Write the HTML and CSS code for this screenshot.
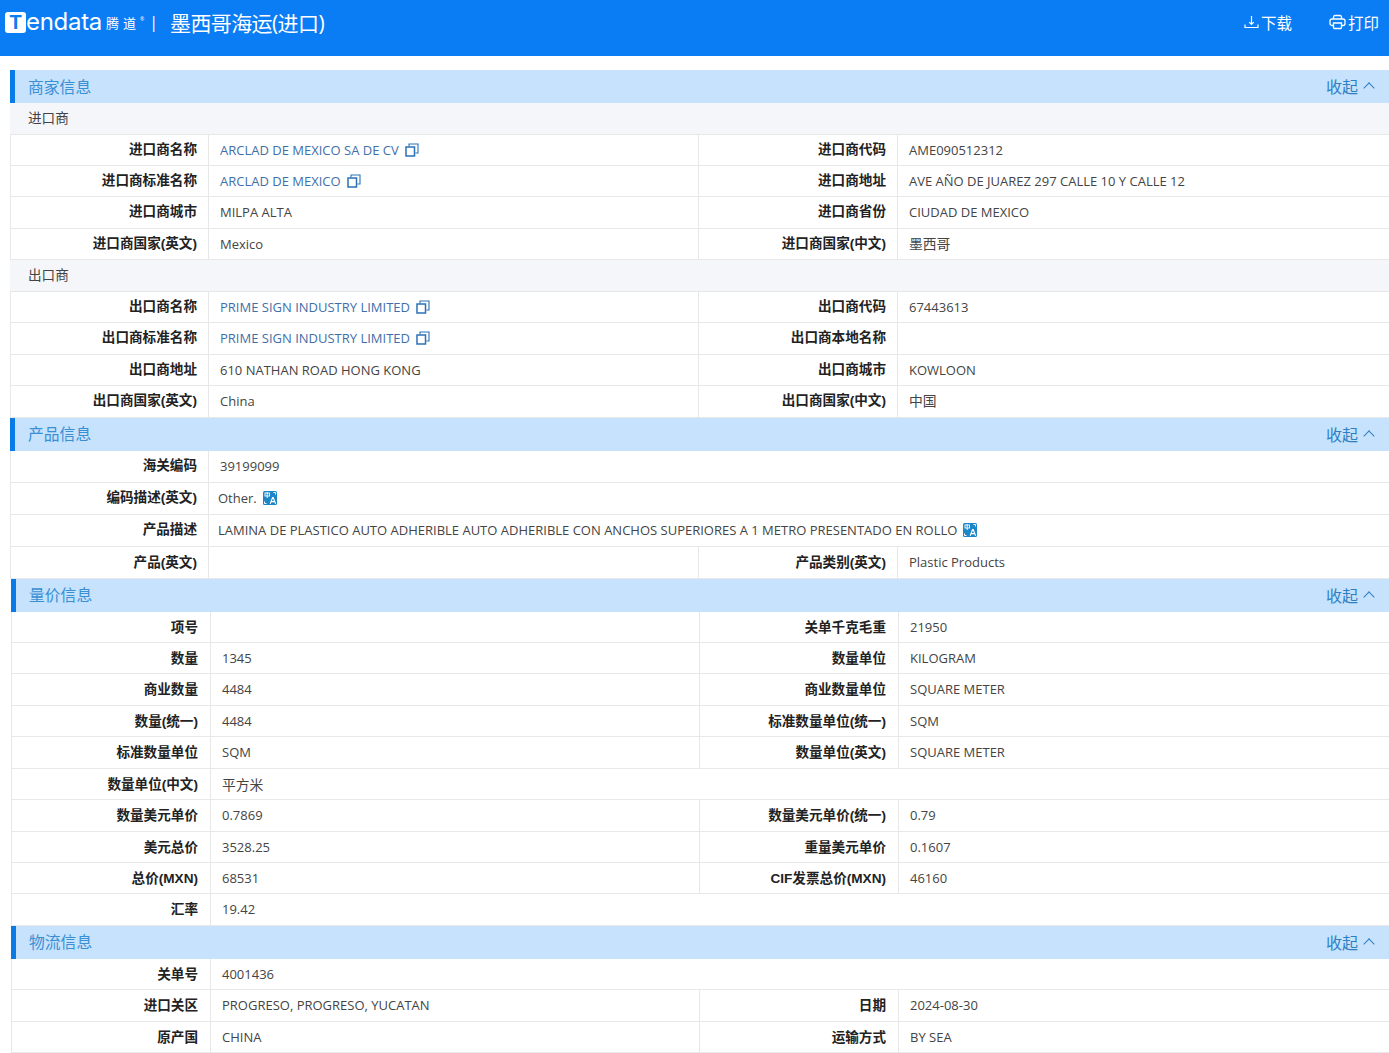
FILE: index.html
```html
<!DOCTYPE html>
<html lang="en">
<head>
    <meta charset="UTF-8">
    <meta name="viewport" content="width=device-width, initial-scale=1.0">
    <link rel="stylesheet" href="styles.css">
    <title>墨西哥海运(进口)</title>
</head>
<body>
    <svg class="defs" width="0" height="0">
        <symbol id="copy" viewBox="0 0 14 14">
            <path d="M1 4h8.5v9H1z" fill="none" stroke="currentColor" stroke-width="1.5"/>
            <path d="M4 3.5V1h9v9h-2.6" fill="none" stroke="currentColor" stroke-width="1.1"/>
        </symbol>
    </svg>

    <header class="top-bar">
        <div class="brand">
            <span class="logo-t">T</span><span class="logo-word">endata</span>
            <span class="logo-cn">腾道</span><sup class="logo-reg">®</sup>
            <span class="logo-sep">|</span>
        </div>
        <h1 class="page-title">墨西哥海运(进口)</h1>
        <div class="top-actions">
            <a class="top-action">
                <svg width="15" height="16" viewBox="0 0 15 16" fill="none" stroke="#fff" stroke-width="1.2"><path d="M7.5 2v8.5M5.2 8.2l2.3 2.3 2.3-2.3M1 10.5V13.5h13v-3"/></svg>下载
            </a>
            <a class="top-action">
                <svg width="17" height="16" viewBox="0 0 17 16" fill="none" stroke="#fff" stroke-width="1.3"><path d="M4.5 5V3A1.5 1.5 0 016 1.5h5A1.5 1.5 0 0112.5 3v2"/><rect x="1" y="5" width="15" height="6.5" rx="2"/><path d="M4.5 9h8v4.5a1 1 0 01-1 1h-6a1 1 0 01-1-1z" fill="#0a7cf4"/></svg>打印
            </a>
        </div>
    </header>

    <main class="content">
        <section class="block">
            <div class="block-head"><h2>商家信息</h2><a class="collapse">收起<i class="chevron"></i></a></div>
            <div class="sub-head">进口商</div>
            <div class="row"><div class="label">进口商名称</div><div class="value link">ARCLAD DE MEXICO SA DE CV<svg class="copy-icon"><use href="#copy"/></svg></div><div class="label">进口商代码</div><div class="value">AME090512312</div></div>
            <div class="row"><div class="label">进口商标准名称</div><div class="value link">ARCLAD DE MEXICO<svg class="copy-icon"><use href="#copy"/></svg></div><div class="label">进口商地址</div><div class="value">AVE AÑO DE JUAREZ 297 CALLE 10 Y CALLE 12</div></div>
            <div class="row"><div class="label">进口商城市</div><div class="value">MILPA ALTA</div><div class="label">进口商省份</div><div class="value">CIUDAD DE MEXICO</div></div>
            <div class="row"><div class="label">进口商国家(英文)</div><div class="value">Mexico</div><div class="label">进口商国家(中文)</div><div class="value value-cn">墨西哥</div></div>
            <div class="sub-head">出口商</div>
            <div class="row"><div class="label">出口商名称</div><div class="value link">PRIME SIGN INDUSTRY LIMITED<svg class="copy-icon"><use href="#copy"/></svg></div><div class="label">出口商代码</div><div class="value">67443613</div></div>
            <div class="row"><div class="label">出口商标准名称</div><div class="value link">PRIME SIGN INDUSTRY LIMITED<svg class="copy-icon"><use href="#copy"/></svg></div><div class="label">出口商本地名称</div><div class="value"></div></div>
            <div class="row"><div class="label">出口商地址</div><div class="value">610 NATHAN ROAD HONG KONG</div><div class="label">出口商城市</div><div class="value">KOWLOON</div></div>
            <div class="row"><div class="label">出口商国家(英文)</div><div class="value">China</div><div class="label">出口商国家(中文)</div><div class="value value-cn">中国</div></div>
        </section>

        <section class="block block-tall">
            <div class="block-head"><h2>产品信息</h2><a class="collapse">收起<i class="chevron"></i></a></div>
            <div class="row row-wide"><div class="label">海关编码</div><div class="value">39199099</div></div>
            <div class="row row-wide"><div class="label">编码描述(英文)</div><div class="value value-tight">Other.<svg class="translate-icon" viewBox="0 0 14 14"><rect width="14" height="14" rx="1.5" fill="#1d86c8"/><path d="M1.5 10.5v2h2M12.5 3.5v-2h-2" stroke="#fff" stroke-width="1" fill="none"/><rect x="2" y="2" width="4.5" height="3" fill="none" stroke="#fff" stroke-width="0.9"/><path d="M4.2 1v6" stroke="#fff" stroke-width="0.9"/><path d="M7.2 12.8L9.6 6.5h.6l2.4 6.3M8.2 10.6h3.4" stroke="#fff" stroke-width="1.1" fill="none"/></svg></div></div>
            <div class="row row-wide"><div class="label">产品描述</div><div class="value value-tight">LAMINA DE PLASTICO AUTO ADHERIBLE AUTO ADHERIBLE CON ANCHOS SUPERIORES A 1 METRO PRESENTADO EN ROLLO<svg class="translate-icon" viewBox="0 0 14 14"><rect width="14" height="14" rx="1.5" fill="#1d86c8"/><path d="M1.5 10.5v2h2M12.5 3.5v-2h-2" stroke="#fff" stroke-width="1" fill="none"/><rect x="2" y="2" width="4.5" height="3" fill="none" stroke="#fff" stroke-width="0.9"/><path d="M4.2 1v6" stroke="#fff" stroke-width="0.9"/><path d="M7.2 12.8L9.6 6.5h.6l2.4 6.3M8.2 10.6h3.4" stroke="#fff" stroke-width="1.1" fill="none"/></svg></div></div>
            <div class="row row-last"><div class="label">产品(英文)</div><div class="value"></div><div class="label">产品类别(英文)</div><div class="value">Plastic Products</div></div>
        </section>

        <section class="block block-shift">
            <div class="block-head"><h2>量价信息</h2><a class="collapse">收起<i class="chevron"></i></a></div>
            <div class="row"><div class="label">项号</div><div class="value"></div><div class="label">关单千克毛重</div><div class="value">21950</div></div>
            <div class="row"><div class="label">数量</div><div class="value">1345</div><div class="label">数量单位</div><div class="value">KILOGRAM</div></div>
            <div class="row"><div class="label">商业数量</div><div class="value">4484</div><div class="label">商业数量单位</div><div class="value">SQUARE METER</div></div>
            <div class="row"><div class="label">数量(统一)</div><div class="value">4484</div><div class="label">标准数量单位(统一)</div><div class="value">SQM</div></div>
            <div class="row"><div class="label">标准数量单位</div><div class="value">SQM</div><div class="label">数量单位(英文)</div><div class="value">SQUARE METER</div></div>
            <div class="row row-wide"><div class="label">数量单位(中文)</div><div class="value value-cn">平方米</div></div>
            <div class="row"><div class="label">数量美元单价</div><div class="value">0.7869</div><div class="label">数量美元单价(统一)</div><div class="value">0.79</div></div>
            <div class="row"><div class="label">美元总价</div><div class="value">3528.25</div><div class="label">重量美元单价</div><div class="value">0.1607</div></div>
            <div class="row"><div class="label">总价(MXN)</div><div class="value">68531</div><div class="label">CIF发票总价(MXN)</div><div class="value">46160</div></div>
            <div class="row row-wide"><div class="label">汇率</div><div class="value">19.42</div></div>
        </section>

        <section class="block block-shift">
            <div class="block-head"><h2>物流信息</h2><a class="collapse">收起<i class="chevron"></i></a></div>
            <div class="row row-wide"><div class="label">关单号</div><div class="value">4001436</div></div>
            <div class="row"><div class="label">进口关区</div><div class="value">PROGRESO, PROGRESO, YUCATAN</div><div class="label">日期</div><div class="value">2024-08-30</div></div>
            <div class="row"><div class="label">原产国</div><div class="value">CHINA</div><div class="label">运输方式</div><div class="value">BY SEA</div></div>
        </section>
    </main>
</body>
</html>
```

FILE: styles.css
```css
* {
    box-sizing: border-box;
}

body {
    margin: 0;
    background-color: #fff;
    color: #444;
    font-family: 'Open Sans', 'Noto Sans CJK SC', sans-serif;
    font-size: 13px;
    overflow-x: hidden;
}

.defs {
    position: absolute;
}

.top-bar {
    display: flex;
    align-items: center;
    height: 56px;
    padding: 0 10px 12px 5px;
    background-color: #0a7cf4;
    color: #fff;
}

.brand {
    display: flex;
    align-items: center;
    width: 165px;
}

.logo-t {
    width: 21px;
    height: 21px;
    border-radius: 3px;
    background-color: #fff;
    color: #0a7cf4;
    font: 700 20px/21px 'Liberation Sans', sans-serif;
    text-align: center;
}

.logo-word {
    font: 400 24px/1 'Inter', sans-serif;
    letter-spacing: -0.3px;
}

.logo-cn {
    margin-left: 4px;
    font-size: 13px;
    letter-spacing: 4px;
}

.logo-reg {
    align-self: flex-start;
    margin-top: 6px;
    font-size: 5px;
}

.logo-sep {
    margin-left: 5px;
    font-size: 16px;
}

.page-title {
    margin: 0;
    font-size: 21px;
    font-weight: 400;
    letter-spacing: -0.6px;
}

.top-actions {
    display: flex;
    gap: 37px;
    margin-left: auto;
}

.top-action {
    display: flex;
    align-items: center;
    gap: 2px;
    font-size: 15.5px;
}

.content {
    padding-top: 14px;
    margin-left: 10px;
}

.block-shift {
    margin-left: 1px;
}

.block-head {
    display: flex;
    align-items: center;
    justify-content: space-between;
    height: 33px;
    padding: 0 15px 1px 13px;
    border-left: 5px solid #0a7be6;
    background-color: #c6e2fd;
}

.block-head h2 {
    margin: 0;
    color: #3a8fd3;
    font-size: 15.8px;
    font-weight: 400;
}

.collapse {
    display: flex;
    align-items: center;
    color: #2f7fc4;
    font-size: 16px;
}

.chevron {
    width: 8px;
    height: 8px;
    margin: 4px 1px 0 7px;
    border-top: 1px solid #2f7fc4;
    border-left: 1px solid #2f7fc4;
    transform: rotate(45deg);
}

.sub-head {
    height: 31.5px;
    padding-left: 18px;
    border-bottom: 1px solid #e8e8e8;
    background-color: #f4f6fa;
    font-size: 13.6px;
    line-height: 30px;
}

.row {
    display: grid;
    grid-template-columns: 198px 490px 199px 1fr;
    height: 31.45px;
    border-left: 1px solid #e8e8e8;
    border-bottom: 1px solid #e8e8e8;
}

.row-wide {
    grid-template-columns: 198px 1fr;
}

.block-tall .row {
    height: 32px;
}

.block-shift .row {
    grid-template-columns: 199px 489px 199px 1fr;
}

.block-shift .row-wide {
    grid-template-columns: 199px 1fr;
}

.label,
.value {
    line-height: 30px;
    white-space: nowrap;
}

.block-shift .label,
.block-shift .value,
.row-last .label,
.row-last .value {
    line-height: 31px;
}

.label {
    padding-right: 11px;
    border-right: 1px solid #e8e8e8;
    color: #222;
    font-family: 'Liberation Sans', 'Noto Sans CJK SC', sans-serif;
    font-size: 13.6px;
    font-weight: 700;
    text-align: right;
}

.block-shift .label {
    padding-right: 12px;
}

.value {
    padding-left: 11px;
    border-right: 1px solid #e8e8e8;
}

.value:last-child {
    border-right: 0;
}

.value-cn {
    font-size: 13.8px;
}

.value-tight {
    padding-left: 9px;
}

.link {
    color: #3f6fa8;
}

.copy-icon {
    width: 14px;
    height: 14px;
    margin-left: 6px;
    vertical-align: -2px;
    color: #2a72b8;
}

.translate-icon {
    width: 14px;
    height: 14px;
    margin-left: 6px;
    vertical-align: -2px;
}
```
